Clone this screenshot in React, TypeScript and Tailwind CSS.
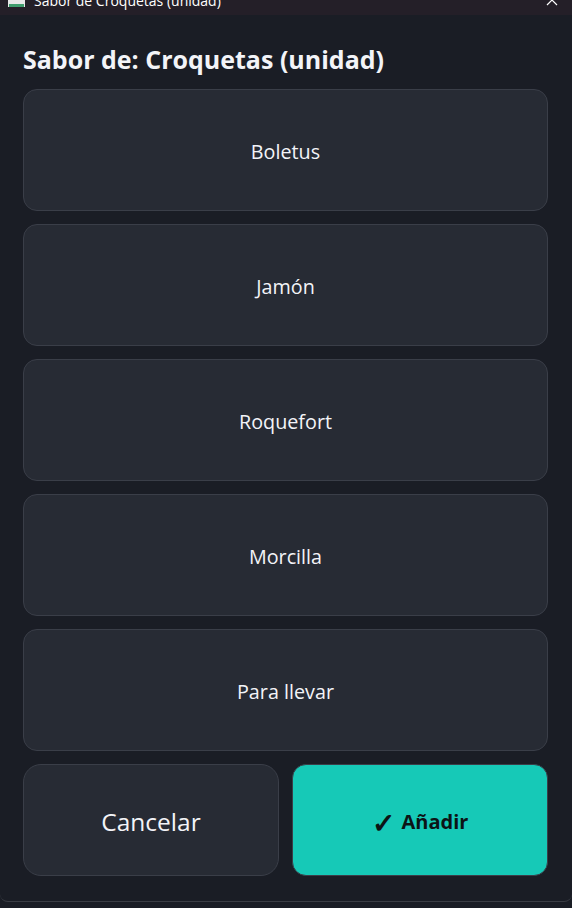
const font = { fontFamily: '"Open Sans", "Noto Sans", sans-serif' }

const flavors = ['Boletus', 'Jamón', 'Roquefort', 'Morcilla', 'Para llevar']

export default function App(): React.JSX.Element {
  return (
    <div
      style={font}
      className="w-[572px] h-[908px] overflow-hidden bg-[#1a1d25] flex flex-col"
    >
      {/* window title bar, scrolled off the top of the capture */}
      <div className="h-[15px] shrink-0 overflow-hidden bg-[#241f28]">
        <div className="-mt-[16px] h-8 flex items-center justify-between pl-2 pr-[14px]">
          <div className="flex items-center gap-[9px]">
            <svg width="17" height="16" viewBox="0 0 17 16">
              <rect x="0" y="1" width="17" height="14" fill="#e8e8e8" />
              <rect x="1" y="12" width="15" height="3" fill="#3f9d6d" />
            </svg>
            <span className="text-[14px] text-white">Sabor de Croquetas (unidad)</span>
          </div>
          <svg width="12" height="12" viewBox="0 0 12 12" fill="none" stroke="#fff" strokeWidth="1.2">
            <path d="M1 1l10 10M11 1L1 11" />
          </svg>
        </div>
      </div>

      <div className="h-[887px] shrink-0 rounded-b-lg border-b border-[#3a3d44] pl-[23px] pr-[24px] pt-[24px] flex flex-col">
        <h1 className="h-[50px] text-[25px] leading-[40px] font-bold text-[#f3f4f8]">
          Sabor de: Croquetas (unidad)
        </h1>
        <div className="flex flex-col gap-[13px]">
          {flavors.map((name) => (
            <button
              key={name}
              className="h-[122px] pt-1 rounded-[14px] border border-[#3a3e48] bg-[#272b34] text-[19.75px] text-[#f3f4f8] flex items-center justify-center"
            >
              {name}
            </button>
          ))}
          <div className="grid grid-cols-2 gap-[13px]">
            <button className="h-[112px] pt-1 rounded-[18px] border border-[#3a3e48] bg-[#272b34] text-[24.5px] text-[#f3f4f8]">
              Cancelar
            </button>
            <button className="h-[112px] pt-1 rounded-[14px] border border-[#3a3e48] bg-[#16c9b7] text-[20px] font-bold text-[#0c1416] flex items-center justify-center gap-[7px]">
              <span className="text-[28px] leading-none">✓</span>
              <span>Añadir</span>
            </button>
          </div>
        </div>
      </div>
    </div>
  )
}
